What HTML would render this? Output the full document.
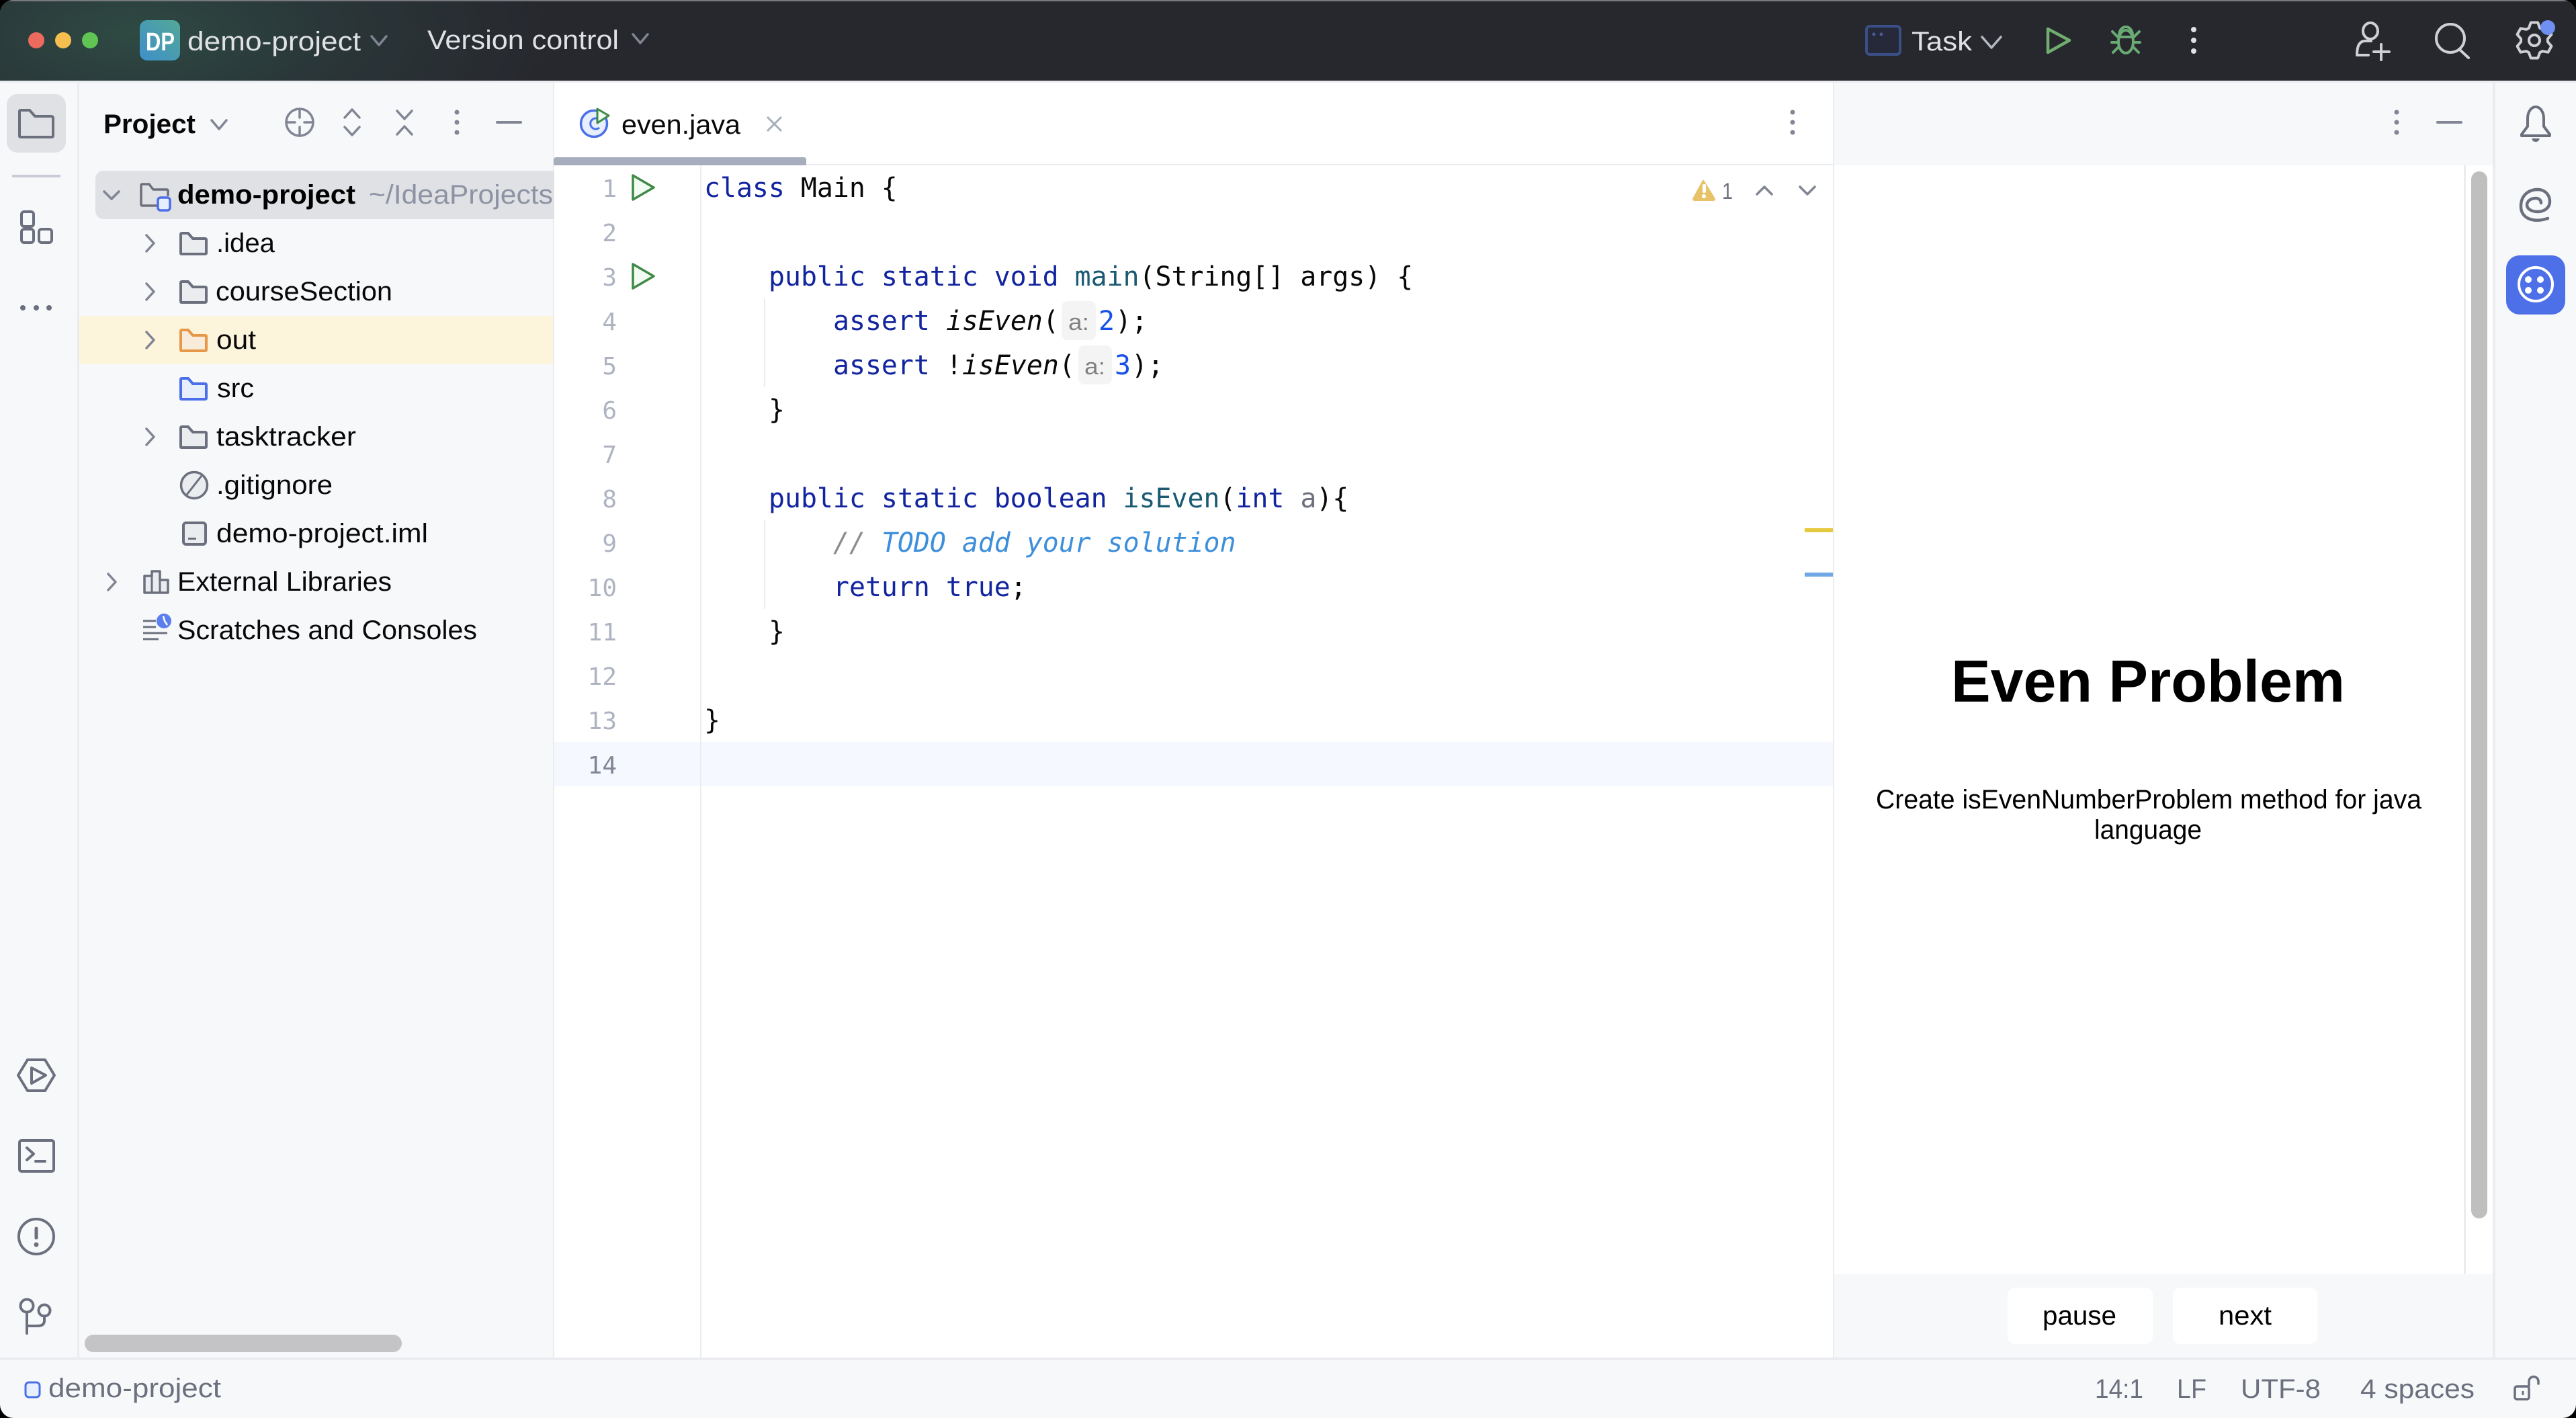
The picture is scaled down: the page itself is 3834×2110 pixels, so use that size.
<!DOCTYPE html>
<html><head><meta charset="utf-8"><title>even.java</title>
<style>
html,body{margin:0;padding:0;background:#000;width:3834px;height:2110px;overflow:hidden}
svg{display:block}
text{font-family:"Liberation Sans",sans-serif;font-size:40px;white-space:pre}
.m{font-family:"DejaVu Sans Mono","Liberation Mono",monospace;font-size:39.85px}
.n{font-family:"DejaVu Sans Mono","Liberation Mono",monospace;font-size:36px;fill:#aeb3c2;text-anchor:end}
.k{fill:#12259e}.d{fill:#080808}.f{fill:#1a5a72}.h{fill:#1750eb}
.s{fill:none;stroke:#6c707e;stroke-width:4;stroke-linecap:round;stroke-linejoin:round}
.c{fill:none;stroke:#818594;stroke-width:3.5;stroke-linecap:round;stroke-linejoin:round}
.g{fill:#ebecf0;stroke:#6c707e;stroke-width:4;stroke-linejoin:round}
.w{fill:none;stroke:#ced0d6;stroke-width:4;stroke-linecap:round;stroke-linejoin:round}
</style></head><body>
<svg xmlns="http://www.w3.org/2000/svg" width="3834" height="2110" viewBox="0 0 3834 2110">
<defs>
<clipPath id="win"><rect width="3834" height="2110" rx="20" ry="20"/></clipPath>
<radialGradient id="tb" gradientUnits="userSpaceOnUse" cx="200" cy="50" r="620" gradientTransform="translate(0 30) scale(1 .4)">
<stop offset="0" stop-color="#2e4a43"/><stop offset=".45" stop-color="#2a3739"/><stop offset="1" stop-color="#27282e"/></radialGradient>
<linearGradient id="dp" x1="1" y1="0" x2="0" y2="1"><stop offset="0" stop-color="#53a896"/><stop offset="1" stop-color="#3f8fcb"/></linearGradient>
<clipPath id="tree"><rect x="118" y="240" width="705" height="780"/></clipPath>
</defs>
<g clip-path="url(#win)">
<rect width="3834" height="2110" fill="#f7f8fa"/>
<!-- title bar -->
<rect width="3834" height="120" fill="#27282e"/>
<rect width="3834" height="120" fill="url(#tb)"/>
<rect width="3834" height="2" fill="#77797e"/>
<circle cx="54" cy="60" r="12" fill="#ec6a5e"/><circle cx="94" cy="60" r="12" fill="#f4bf4f"/><circle cx="134" cy="60" r="12" fill="#61c554"/>
<rect x="208" y="30" width="60" height="60" rx="11" fill="url(#dp)"/>
<text x="217" y="75" fill="#fff" font-weight="bold" style="font-size:38px" textLength="43" lengthAdjust="spacingAndGlyphs">DP</text>
<text x="279" y="75" fill="#dfe1e5" textLength="258" lengthAdjust="spacingAndGlyphs">demo-project</text>
<path d="M553 54l11 13 11-13" class="c" stroke="#9da0a8"/>
<text x="636" y="73" fill="#dfe1e5" textLength="285" lengthAdjust="spacingAndGlyphs">Version control</text>
<path d="M942 51l11 13 11-13" class="c" stroke="#9da0a8"/>
<rect x="2778" y="39" width="50" height="42" rx="5" fill="#25293a" stroke="#3b4f87" stroke-width="4"/>
<circle cx="2789" cy="51" r="2.5" fill="#4a5c95"/><circle cx="2800" cy="51" r="2.5" fill="#4a5c95"/>
<text x="2845" y="75" fill="#dfe1e5" textLength="90" lengthAdjust="spacingAndGlyphs">Task</text>
<path d="M2950 55l14 16 14-16" fill="none" stroke="#b4b8bf" stroke-width="3.5" stroke-linecap="round" stroke-linejoin="round"/>
<path d="M3048 43L3080 60 3048 78Z" fill="none" stroke="#6fae6c" stroke-width="4.5" stroke-linejoin="round"/>
<g fill="none" stroke="#6aab73" stroke-width="4" stroke-linecap="round">
<ellipse cx="3164" cy="62" rx="11" ry="17"/>
<path d="M3154 52a10 12 0 0 1 20 0M3153 55h22M3144 47l8 8M3184 47l-8 8M3143 63h10M3185 63h-10M3145 78l8-8M3183 78l-8-8"/>
</g>
<circle cx="3265" cy="44" r="4" fill="#dfe1e5"/><circle cx="3265" cy="60" r="4" fill="#dfe1e5"/><circle cx="3265" cy="76" r="4" fill="#dfe1e5"/>
<ellipse cx="3528" cy="46" rx="11" ry="12" class="w"/>
<path d="M3508 82c0-8 1-21 12-21h9M3508 82h17M3544 66v23M3533 77h23" class="w"/>
<circle cx="3647" cy="57" r="21" class="w"/><path d="M3660 73l14 13" class="w"/>
<g transform="translate(3772 60)">
<polygon points="-8.1,-18.3 -5.2,-26.5 5.2,-26.5 8.1,-18.3 11.8,-16.2 20.4,-17.7 25.5,-8.8 19.9,-2.1 19.9,2.1 25.5,8.8 20.4,17.7 11.8,16.2 8.1,18.3 5.2,26.5 -5.2,26.5 -8.1,18.3 -11.8,16.2 -20.4,17.7 -25.5,8.8 -19.9,2.1 -19.9,-2.1 -25.5,-8.8 -20.4,-17.7 -11.8,-16.2" class="w"/>
<circle r="8" class="w"/></g>
<circle cx="3792" cy="41" r="11" fill="#6f90f2"/>

<!-- separators -->
<rect y="120" width="3834" height="3" fill="#ebecf0"/>
<rect x="115" y="123" width="3" height="1897" fill="#ebecf0"/>
<rect x="0" y="2020" width="3834" height="4" fill="#ebecf0"/>

<!-- left toolbar -->
<rect x="10" y="140" width="88" height="87" rx="16" fill="#dfe1e5"/>
<path d="M31 204Q29 204 29 202V166Q29 164 31 164H44L52 173H76Q79 173 79 176V202Q79 204 76 204Z" class="s"/>
<rect x="18" y="260" width="72" height="4" fill="#c9ccd6"/>
<rect x="32" y="315" width="18" height="22" rx="4" class="s"/>
<rect x="32" y="341" width="18" height="20" rx="4" class="s"/>
<rect x="58" y="341" width="19" height="20" rx="4" class="s"/>
<circle cx="34" cy="458" r="4" fill="#6c707e"/><circle cx="54" cy="458" r="4" fill="#6c707e"/><circle cx="73" cy="458" r="4" fill="#6c707e"/>
<path d="M41 1577H67L81 1600 67 1623H41L27 1600Z" class="s"/>
<path d="M47 1589L68 1600 47 1612Z" class="s"/>
<rect x="29" y="1697" width="51" height="46" rx="3" class="s"/>
<path d="M40 1708l10 9-10 9M53 1728h14" class="s"/>
<circle cx="54" cy="1840" r="26" class="s"/><path d="M54 1828v14" class="s" style="stroke-width:5"/><circle cx="54" cy="1852" r="3.5" fill="#6c707e"/>
<circle cx="40" cy="1943" r="9.5" class="s"/><circle cx="66" cy="1950" r="8.5" class="s"/>
<path d="M40 1953v31M40 1973h16q10 0 10-8v-7" class="s"/>

<!-- project panel -->
<rect x="823" y="123" width="2" height="1897" fill="#ebecf0"/>
<text x="154" y="198" fill="#080808" font-weight="bold" textLength="137" lengthAdjust="spacingAndGlyphs">Project</text>
<path d="M315 179l11 13 11-13" class="c"/>
<circle cx="446" cy="182" r="20" class="c"/><path d="M446 162v13M446 189v13M426 182h13M453 182h13" class="c"/>
<path d="M513 175l11-12 11 12M513 189l11 12 11-12" class="c"/>
<path d="M591 165l11 12 11-12M591 200l11-12 11 12" class="c"/>
<circle cx="680" cy="167" r="3.5" fill="#818594"/><circle cx="680" cy="182" r="3.5" fill="#818594"/><circle cx="680" cy="197" r="3.5" fill="#818594"/>
<rect x="738" y="180" width="39" height="4" rx="2" fill="#818594"/>

<rect x="142" y="254" width="700" height="72" rx="12" fill="#dfe1e5"/>
<rect x="118" y="470" width="705" height="72" fill="#fdf4dc"/>
<g clip-path="url(#tree)">
<path d="M155 285l11 11 11-11" class="c"/>
<path d="M234 306H212Q210 306 210 304V276Q210 274 212 274H222L228 282H248Q250 282 250 284V292" fill="none" stroke="#6c707e" stroke-width="3.5" stroke-linejoin="round"/>
<rect x="235" y="294" width="18" height="19" rx="4" fill="#e7effd" stroke="#4a6fe8" stroke-width="3.5"/>
<text x="264" y="303" fill="#000" font-weight="bold" textLength="265" lengthAdjust="spacingAndGlyphs">demo-project</text>
<text x="549" y="303" fill="#8e93a3" textLength="274" lengthAdjust="spacingAndGlyphs">~/IdeaProjects</text>

<path d="M218 350l11 12-11 12" class="c"/>
<path transform="translate(267 345)" d="M3 33Q2 33 2 31V4Q2 2 4 2H13L20 10H38Q40 10 40 12V31Q40 33 38 33Z" class="g"/>
<text x="322" y="375" fill="#080808" textLength="87" lengthAdjust="spacingAndGlyphs">.idea</text>

<path d="M218 422l11 12-11 12" class="c"/>
<path transform="translate(267 417)" d="M3 33Q2 33 2 31V4Q2 2 4 2H13L20 10H38Q40 10 40 12V31Q40 33 38 33Z" class="g"/>
<text x="321" y="447" fill="#080808" textLength="263" lengthAdjust="spacingAndGlyphs">courseSection</text>

<path d="M218 494l11 12-11 12" class="c"/>
<path transform="translate(267 489)" d="M3 33Q2 33 2 31V4Q2 2 4 2H13L20 10H38Q40 10 40 12V31Q40 33 38 33Z" fill="#f9ebd9" stroke="#e69848" stroke-width="4" stroke-linejoin="round"/>
<text x="322" y="519" fill="#080808" textLength="59" lengthAdjust="spacingAndGlyphs">out</text>

<path transform="translate(267 561)" d="M3 33Q2 33 2 31V4Q2 2 4 2H13L20 10H38Q40 10 40 12V31Q40 33 38 33Z" fill="#e7effd" stroke="#4a6fe8" stroke-width="4" stroke-linejoin="round"/>
<text x="323" y="591" fill="#080808" textLength="55" lengthAdjust="spacingAndGlyphs">src</text>

<path d="M218 638l11 12-11 12" class="c"/>
<path transform="translate(267 633)" d="M3 33Q2 33 2 31V4Q2 2 4 2H13L20 10H38Q40 10 40 12V31Q40 33 38 33Z" class="g"/>
<text x="322" y="663" fill="#080808" textLength="208" lengthAdjust="spacingAndGlyphs">tasktracker</text>

<circle cx="289" cy="722" r="19.5" class="g" style="stroke-width:3.5"/><path d="M300 708l-22 28" fill="none" stroke="#6c707e" stroke-width="3"/>
<text x="322" y="735" fill="#080808" textLength="173" lengthAdjust="spacingAndGlyphs">.gitignore</text>

<rect x="273" y="778" width="33" height="32" rx="4" class="g"/><rect x="280" y="800" width="12" height="3" fill="#6c707e"/>
<text x="322" y="807" fill="#080808" textLength="315" lengthAdjust="spacingAndGlyphs">demo-project.iml</text>

<path d="M161 854l11 12-11 12" class="c"/>
<path d="M215 857H226V850H238V863H250V882H215Z" fill="#ebecf0" stroke="#6c707e" stroke-width="3.5" stroke-linejoin="round"/>
<path d="M226 857V882M238 863V882" fill="none" stroke="#6c707e" stroke-width="3"/>
<text x="264" y="879" fill="#080808" textLength="319" lengthAdjust="spacingAndGlyphs">External Libraries</text>

<path d="M213 924h19M213 933h19M213 942h36M213 951h23" fill="none" stroke="#6c707e" stroke-width="3"/>
<circle cx="244" cy="924" r="11" fill="#5b80ee"/><path d="M243 917l2 7 4 6" fill="none" stroke="#fff" stroke-width="2.5"/>
<text x="264" y="951" fill="#080808" textLength="446" lengthAdjust="spacingAndGlyphs">Scratches and Consoles</text>
</g>
<rect x="126" y="1986" width="472" height="26" rx="13" fill="#c4c4c6"/>

<!-- editor -->
<rect x="825" y="123" width="1903" height="1897" fill="#fff"/>
<rect x="2728" y="123" width="2" height="1897" fill="#ebecf0"/>
<rect x="1200" y="244" width="1528" height="2" fill="#ebecf0"/>
<path d="M824 246v-8q0-4 4-4h368q4 0 4 4v8z" fill="#a8adbd"/>
<circle cx="884" cy="184" r="19.5" fill="#e7effd" stroke="#4a6fe8" stroke-width="3.5"/>
<path d="M892 178a8 8 0 1 0 0 12" fill="none" stroke="#4a6fe8" stroke-width="3"/>
<path d="M889 162L906 172 889 183Z" fill="#f2fcf3" stroke="#3f8a46" stroke-width="3" stroke-linejoin="round"/>
<text x="925" y="199" fill="#080808" textLength="177" lengthAdjust="spacingAndGlyphs">even.java</text>
<path d="M1142 174l21 21M1163 174l-21 21" fill="none" stroke="#a8adbd" stroke-width="3"/>
<circle cx="2668" cy="167" r="3.5" fill="#818594"/><circle cx="2668" cy="182" r="3.5" fill="#818594"/><circle cx="2668" cy="197" r="3.5" fill="#818594"/>

<rect x="825" y="1104" width="1903" height="66" fill="#f5f8fe"/>
<rect x="1042" y="246" width="2" height="1774" fill="#ebecf0"/>
<rect x="1137" y="444" width="2" height="132" fill="#ebecf0"/>
<rect x="1137" y="774" width="2" height="132" fill="#ebecf0"/>

<text class="n" x="918" y="293">1</text><text class="n" x="918" y="359">2</text><text class="n" x="918" y="425">3</text><text class="n" x="918" y="491">4</text><text class="n" x="918" y="557">5</text><text class="n" x="918" y="623">6</text><text class="n" x="918" y="689">7</text><text class="n" x="918" y="755">8</text><text class="n" x="918" y="821">9</text><text class="n" x="918" y="887">10</text><text class="n" x="918" y="953">11</text><text class="n" x="918" y="1019">12</text><text class="n" x="918" y="1085">13</text><text class="n" x="918" y="1151" style="fill:#818594">14</text>

<path d="M942 261L973 279 942 297Z" fill="#f2fcf3" stroke="#3f8a46" stroke-width="3.5" stroke-linejoin="round"/>
<path d="M942 393L973 411 942 429Z" fill="#f2fcf3" stroke="#3f8a46" stroke-width="3.5" stroke-linejoin="round"/>

<text class="m" x="1048" y="293"><tspan class="k">class</tspan><tspan class="d"> Main {</tspan></text>
<text class="m" x="1144" y="425"><tspan class="k">public static void </tspan><tspan class="f">main</tspan><tspan class="d">(String[] args) {</tspan></text>
<text class="m k" x="1240" y="491">assert</text>
<text class="m d" x="1408" y="491" font-style="italic">isEven</text><text class="m d" x="1552" y="491">(</text>
<rect x="1580" y="448" width="51" height="58" rx="9" fill="#f4f4f4"/>
<text x="1590" y="491" fill="#808080" style="font-size:34px" textLength="31" lengthAdjust="spacingAndGlyphs">a:</text>
<text class="m h" x="1635" y="491">2</text><text class="m d" x="1660" y="491">);</text>
<text class="m k" x="1240" y="557">assert</text>
<text class="m d" x="1408" y="557">!</text><text class="m d" x="1432" y="557" font-style="italic">isEven</text><text class="m d" x="1576" y="557">(</text>
<rect x="1605" y="514" width="50" height="58" rx="9" fill="#f4f4f4"/>
<text x="1614" y="557" fill="#808080" style="font-size:34px" textLength="31" lengthAdjust="spacingAndGlyphs">a:</text>
<text class="m h" x="1659" y="557">3</text><text class="m d" x="1684" y="557">);</text>
<text class="m d" x="1144" y="623">}</text>
<text class="m" x="1144" y="755"><tspan class="k">public static boolean </tspan><tspan class="f">isEven</tspan><tspan class="d">(</tspan><tspan class="k">int</tspan><tspan class="d"> </tspan><tspan fill="#6c707e">a</tspan><tspan class="d">){</tspan></text>
<text class="m" x="1240" y="821" font-style="italic"><tspan fill="#8c8c8c">// </tspan><tspan fill="#3d8fdb">TODO add your solution</tspan></text>
<text class="m" x="1240" y="887"><tspan class="k">return true</tspan><tspan class="d">;</tspan></text>
<text class="m d" x="1144" y="953">}</text>
<text class="m d" x="1048" y="1085">}</text>

<path d="M2536 268l16 26q3 5-3 5h-26q-6 0-3-5l13-24q2-3 3-2z" fill="#e8c266"/>
<rect x="2534" y="274" width="5" height="13" rx="2" fill="#fff"/><circle cx="2536" cy="292" r="3" fill="#fff"/>
<text x="2563" y="296" fill="#6c707e" style="font-size:34px" textLength="16" lengthAdjust="spacingAndGlyphs">1</text>
<path d="M2615 289l11-11 11 11M2679 278l11 11 11-11" class="c"/>
<rect x="2686" y="786" width="42" height="6" fill="#e5c93e"/>
<rect x="2686" y="852" width="42" height="6" fill="#6fa8e4"/>

<!-- right tool panel -->
<rect x="2730" y="246" width="937" height="1650" fill="#fff"/>
<rect x="3667" y="246" width="3" height="1650" fill="#ebecf0"/>
<rect x="3670" y="246" width="40" height="1650" fill="#fff"/>
<rect x="3678" y="255" width="24" height="1558" rx="12" fill="#bfbfbf"/>
<rect x="3710" y="123" width="4" height="1897" fill="#ebecf0"/>
<circle cx="3567" cy="167" r="3.5" fill="#818594"/><circle cx="3567" cy="182" r="3.5" fill="#818594"/><circle cx="3567" cy="197" r="3.5" fill="#818594"/>
<rect x="3626" y="180" width="39" height="4" rx="2" fill="#818594"/>
<text x="2904" y="1044" fill="#000" font-weight="bold" style="font-size:88px" textLength="586" lengthAdjust="spacingAndGlyphs">Even Problem</text>
<text x="2792" y="1203" fill="#000" textLength="812" lengthAdjust="spacingAndGlyphs">Create isEvenNumberProblem method for java</text>
<text x="3117" y="1248" fill="#000" textLength="160" lengthAdjust="spacingAndGlyphs">language</text>
<rect x="2988" y="1916" width="216" height="84" rx="11" fill="#fff"/>
<rect x="3234" y="1916" width="215" height="84" rx="11" fill="#fff"/>
<text x="3040" y="1971" fill="#000" textLength="110" lengthAdjust="spacingAndGlyphs">pause</text>
<text x="3302" y="1971" fill="#000" textLength="79" lengthAdjust="spacingAndGlyphs">next</text>

<!-- right toolbar -->
<path d="M3762 176a12 17 0 0 1 24 0v12l9 12v2h-42v-2l9-12z" class="s"/>
<path d="M3768 206h12l-2 4q-4 2-8 0z" fill="#6c707e"/>
<path d="M3792 325C3770 332 3752 325 3752 307C3752 290 3764 282 3777 282C3788 282 3795 290 3795 300C3795 309 3787 315 3777 315C3768 315 3761 311 3761 305C3761 299 3767 295 3774 295C3779 295 3782 298 3782 302" fill="none" stroke="#6c707e" stroke-width="4.5" stroke-linecap="round"/>
<rect x="3730" y="380" width="88" height="88" rx="20" fill="#4d70e8"/>
<circle cx="3774" cy="423" r="25" fill="none" stroke="#fff" stroke-width="4"/>
<circle cx="3763" cy="416" r="5" fill="#fff"/><circle cx="3781" cy="416" r="5" fill="#fff"/><circle cx="3763" cy="432" r="5" fill="#fff"/><circle cx="3781" cy="432" r="5" fill="#fff"/>

<!-- status bar -->
<rect x="38" y="2057" width="21" height="22" rx="5" fill="#e7effd" stroke="#4a6fe8" stroke-width="3"/>
<text x="72" y="2079" fill="#6c707e" textLength="257" lengthAdjust="spacingAndGlyphs">demo-project</text>
<text x="3118" y="2080" fill="#6c707e" textLength="72" lengthAdjust="spacingAndGlyphs">14:1</text>
<text x="3240" y="2080" fill="#6c707e" textLength="44" lengthAdjust="spacingAndGlyphs">LF</text>
<text x="3335" y="2080" fill="#6c707e" textLength="119" lengthAdjust="spacingAndGlyphs">UTF-8</text>
<text x="3513" y="2080" fill="#6c707e" textLength="170" lengthAdjust="spacingAndGlyphs">4 spaces</text>
<rect x="3743" y="2063" width="21" height="19" rx="3" fill="none" stroke="#6c707e" stroke-width="3.5"/>
<path d="M3755 2070v6" fill="none" stroke="#6c707e" stroke-width="3"/>
<path d="M3764 2062v-6a7 7 0 0 1 14-1v4" fill="none" stroke="#6c707e" stroke-width="3.5" stroke-linecap="round"/>
</g>
</svg>
</body></html>
